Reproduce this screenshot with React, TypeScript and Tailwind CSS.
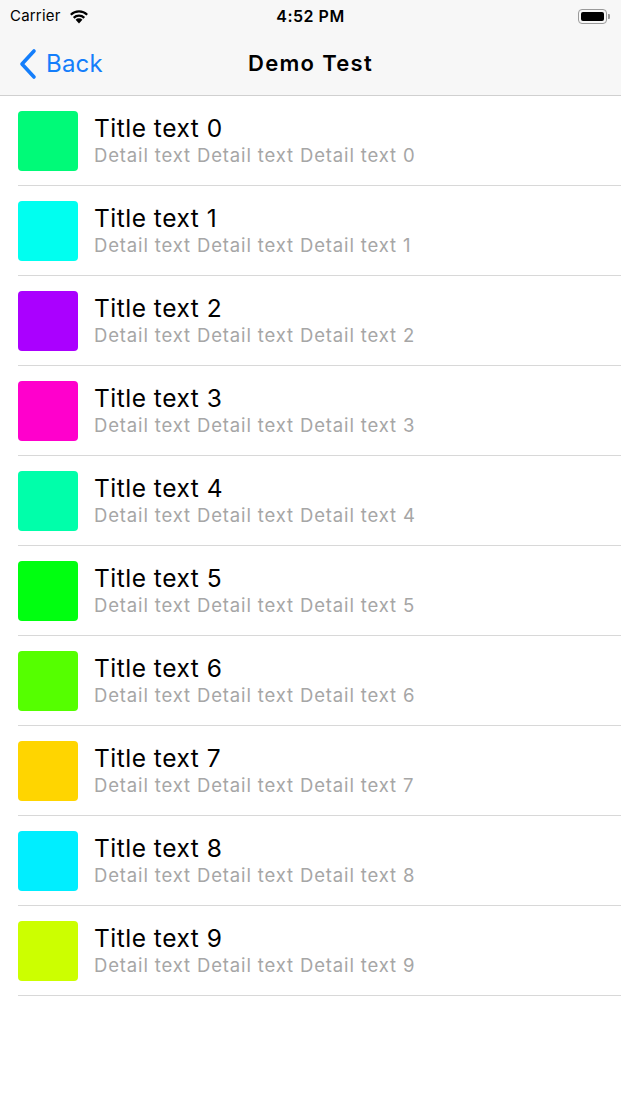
import React from "react";

const colors = [
  "#00fa78",
  "#00fff0",
  "#aa00ff",
  "#ff00cc",
  "#00ffaa",
  "#00ff10",
  "#55ff00",
  "#ffd500",
  "#00eeff",
  "#ccff00",
];

export default function App() {
  return (
    <div className="w-[621px] h-[1104px] bg-white overflow-hidden" style={{ fontFamily: "Inter, 'Noto Sans', sans-serif" }}>
      <div className="bg-[#f7f7f7] border-b border-[#d0d0d0]">
        <div className="relative h-[32px] flex items-center px-[10px]">
          <div className="flex items-center gap-[7px] text-[15px] text-black">
            <span className="tracking-[0.2px]">Carrier</span>
            <svg width="22" height="16" viewBox="0 0 20 15">
              <path d="M10 14.5 L6.8 11 A4.6 4.6 0 0 1 13.2 11 Z" fill="#000" />
              <path d="M4.3 8.4 A8.2 8.2 0 0 1 15.7 8.4 L14.2 10 A6 6 0 0 0 5.8 10 Z" fill="#000" />
              <path d="M1.6 5.6 A12 12 0 0 1 18.4 5.6 L17 7.1 A10 10 0 0 0 3 7.1 Z" fill="#000" />
            </svg>
          </div>
          <div className="absolute left-0 right-0 text-center text-[16px] font-semibold tracking-[0.5px] text-black pointer-events-none">4:52 PM</div>
          <div className="ml-auto flex items-center pr-[1px]">
            <div className="w-[29px] h-[15px] rounded-[4px] border border-[#9a9a9a] p-[2px]">
              <div className="w-full h-full bg-black rounded-[2px]" />
            </div>
            <div className="w-[2px] h-[5px] bg-[#9a9a9a] rounded-r-[1px] ml-[1px]" />
          </div>
        </div>
        <div className="relative h-[63px] flex items-center">
          <div className="flex items-center pl-[18px] gap-[8px] text-[#147efb]">
            <svg width="20" height="32" viewBox="0 0 20 32">
              <path d="M16 3 L4 16 L16 29" fill="none" stroke="#147efb" strokeWidth="3.6" strokeLinecap="round" strokeLinejoin="round" />
            </svg>
            <span className="text-[24px] tracking-[0.2px]">Back</span>
          </div>
          <div className="absolute left-0 right-0 text-center text-[22px] font-semibold tracking-[1.3px] text-black pointer-events-none">Demo Test</div>
        </div>
      </div>
      <div>
        {colors.map((c, i) => (
          <div key={i} className="pl-[18px]">
            <div className="h-[90px] flex items-start border-b border-[#d8d8d8]">
              <div className="mt-[15px] w-[60px] h-[60px] rounded-[4px] shrink-0" style={{ backgroundColor: c }} />
              <div className="ml-[16px] pt-[18px] flex flex-col">
                <span className="text-[24.5px] leading-[28px] tracking-[0.5px] text-black">Title text {i}</span>
                <span className="mt-[1px] text-[18.5px] leading-[24px] tracking-[0.85px] text-[#a6a6a6]">Detail text Detail text Detail text {i}</span>
              </div>
            </div>
          </div>
        ))}
      </div>
    </div>
  );
}
